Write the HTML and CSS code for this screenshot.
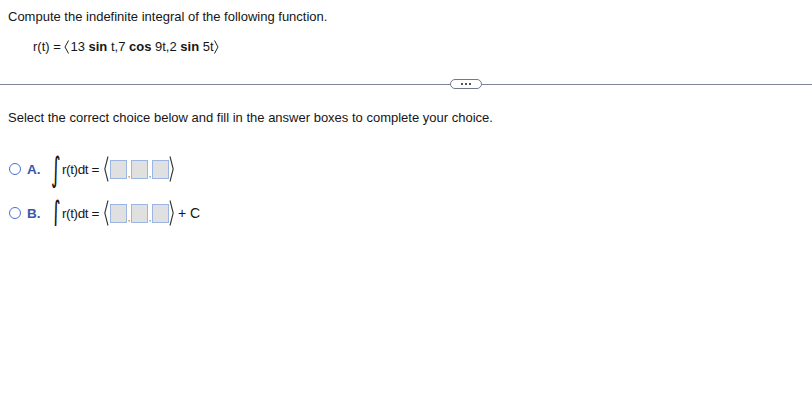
FILE: index.html
```html
<!DOCTYPE html>
<html>
<head>
<meta charset="utf-8">
<link rel="stylesheet" href="styles.css">
</head>
<body>
<div class="page">
  <div class="question">
    <p class="prompt">Compute the indefinite integral of the following function.</p>
    <p class="formula">r(t) = <svg class="ang" width="5" height="14" viewBox="0 0 5 14"><polyline points="4.5,0.5 1,7 4.5,13.5" fill="none" stroke="#222" stroke-width="1"/></svg>13 <b>sin</b> t,7 <b>cos</b> 9t,2 <b>sin</b> 5t<svg class="ang" width="5" height="14" viewBox="0 0 5 14"><polyline points="0.5,0.5 4,7 0.5,13.5" fill="none" stroke="#222" stroke-width="1"/></svg></p>
  </div>
  <div class="divider">
    <span class="line line-left"></span>
    <button class="more"><span></span><span></span><span></span></button>
    <span class="line"></span>
  </div>
  <p class="instr">Select the correct choice below and fill in the answer boxes to complete your choice.</p>
  <div class="choices">
    <div class="choice">
      <span class="radio"></span>
      <span class="label">A.</span>
      <span class="integral">∫</span>
      <span class="expr">r(t)dt =</span>
      <svg class="big-ang open" width="5" height="26" viewBox="0 0 5 26"><polyline points="4,0.5 0.8,13 4,25.5" fill="none" stroke="#333" stroke-width="1.1"/></svg>
      <span class="box"></span><span class="comma">,</span><span class="box"></span><span class="comma">,</span><span class="box"></span>
      <svg class="big-ang close" width="5" height="26" viewBox="0 0 5 26"><polyline points="1,0.5 4.2,13 1,25.5" fill="none" stroke="#333" stroke-width="1.1"/></svg>
    </div>
    <div class="choice">
      <span class="radio"></span>
      <span class="label">B.</span>
      <span class="integral">∫</span>
      <span class="expr">r(t)dt =</span>
      <svg class="big-ang open" width="5" height="26" viewBox="0 0 5 26"><polyline points="4,0.5 0.8,13 4,25.5" fill="none" stroke="#333" stroke-width="1.1"/></svg>
      <span class="box"></span><span class="comma">,</span><span class="box"></span><span class="comma">,</span><span class="box"></span>
      <svg class="big-ang close" width="5" height="26" viewBox="0 0 5 26"><polyline points="1,0.5 4.2,13 1,25.5" fill="none" stroke="#333" stroke-width="1.1"/></svg>
      <span class="plus">+ C</span>
    </div>
  </div>
</div>
</body>
</html>
```

FILE: styles.css
```css
html, body {
  margin: 0;
  padding: 0;
  background: #ffffff;
}
body {
  font-family: "Liberation Sans", Arial, sans-serif;
  font-size: 13px;
  color: #161616;
}
.page {
  padding-top: 9px;
}
p { margin: 0; }
.prompt {
  padding-left: 8px;
  line-height: 16px;
}
.formula {
  padding-left: 33px;
  margin-top: 14px;
  line-height: 16px;
}
.formula b { font-weight: bold; }
.ang {
  vertical-align: -3px;
  margin: 0 1px 0 0;
}
.divider {
  display: flex;
  align-items: center;
  margin-top: 24px;
  height: 10px;
}
.line {
  flex: 1;
  height: 1px;
  background: #7d8797;
}
.line-left { flex: 0 0 450px; }
.more {
  width: 32px;
  height: 10px;
  box-sizing: border-box;
  border: 1px solid #6f7a8c;
  border-radius: 5px;
  background: #fff;
  padding: 0;
  display: flex;
  align-items: center;
  justify-content: center;
  gap: 2px;
}
.more span {
  width: 2px;
  height: 2px;
  background: #4a5568;
}
.instr {
  padding-left: 8px;
  margin-top: 21px;
  line-height: 16px;
}
.choices {
  margin-top: 30px;
  display: flex;
  flex-direction: column;
  gap: 18px;
}
.choice {
  display: flex;
  align-items: center;
  height: 26px;
  padding-left: 9px;
}
.radio {
  width: 10px;
  height: 10px;
  border: 1.5px solid #4a70d4;
  border-radius: 50%;
  flex: none;
}
.label {
  color: #3358b0;
  font-weight: bold;
  font-size: 13.5px;
  margin-left: 6px;
  width: 24px;
}
.integral {
  display: inline-block;
  font-family: "DejaVu Sans", sans-serif;
  font-size: 34px;
  line-height: 26px;
  width: 10px;
  transform: scaleX(0.55);
  transform-origin: left center;
  margin-right: 1px;
}
.expr {
  font-size: 13.5px;
  letter-spacing: -0.4px;
}
.big-ang { flex: none; }
.big-ang.open { margin: 0 1px 0 5px; }
.big-ang.close { margin: 0; }
.box {
  width: 15px;
  height: 17px;
  background: #e0e0e0;
  border: 1px solid #9cb6e4;
  flex: none;
}
.comma {
  width: 4px;
  font-size: 9px;
  align-self: flex-end;
  margin-bottom: 3px;
  color: #666;
  text-align: center;
}
.plus { margin-left: 4px; font-size: 14px; }
```
